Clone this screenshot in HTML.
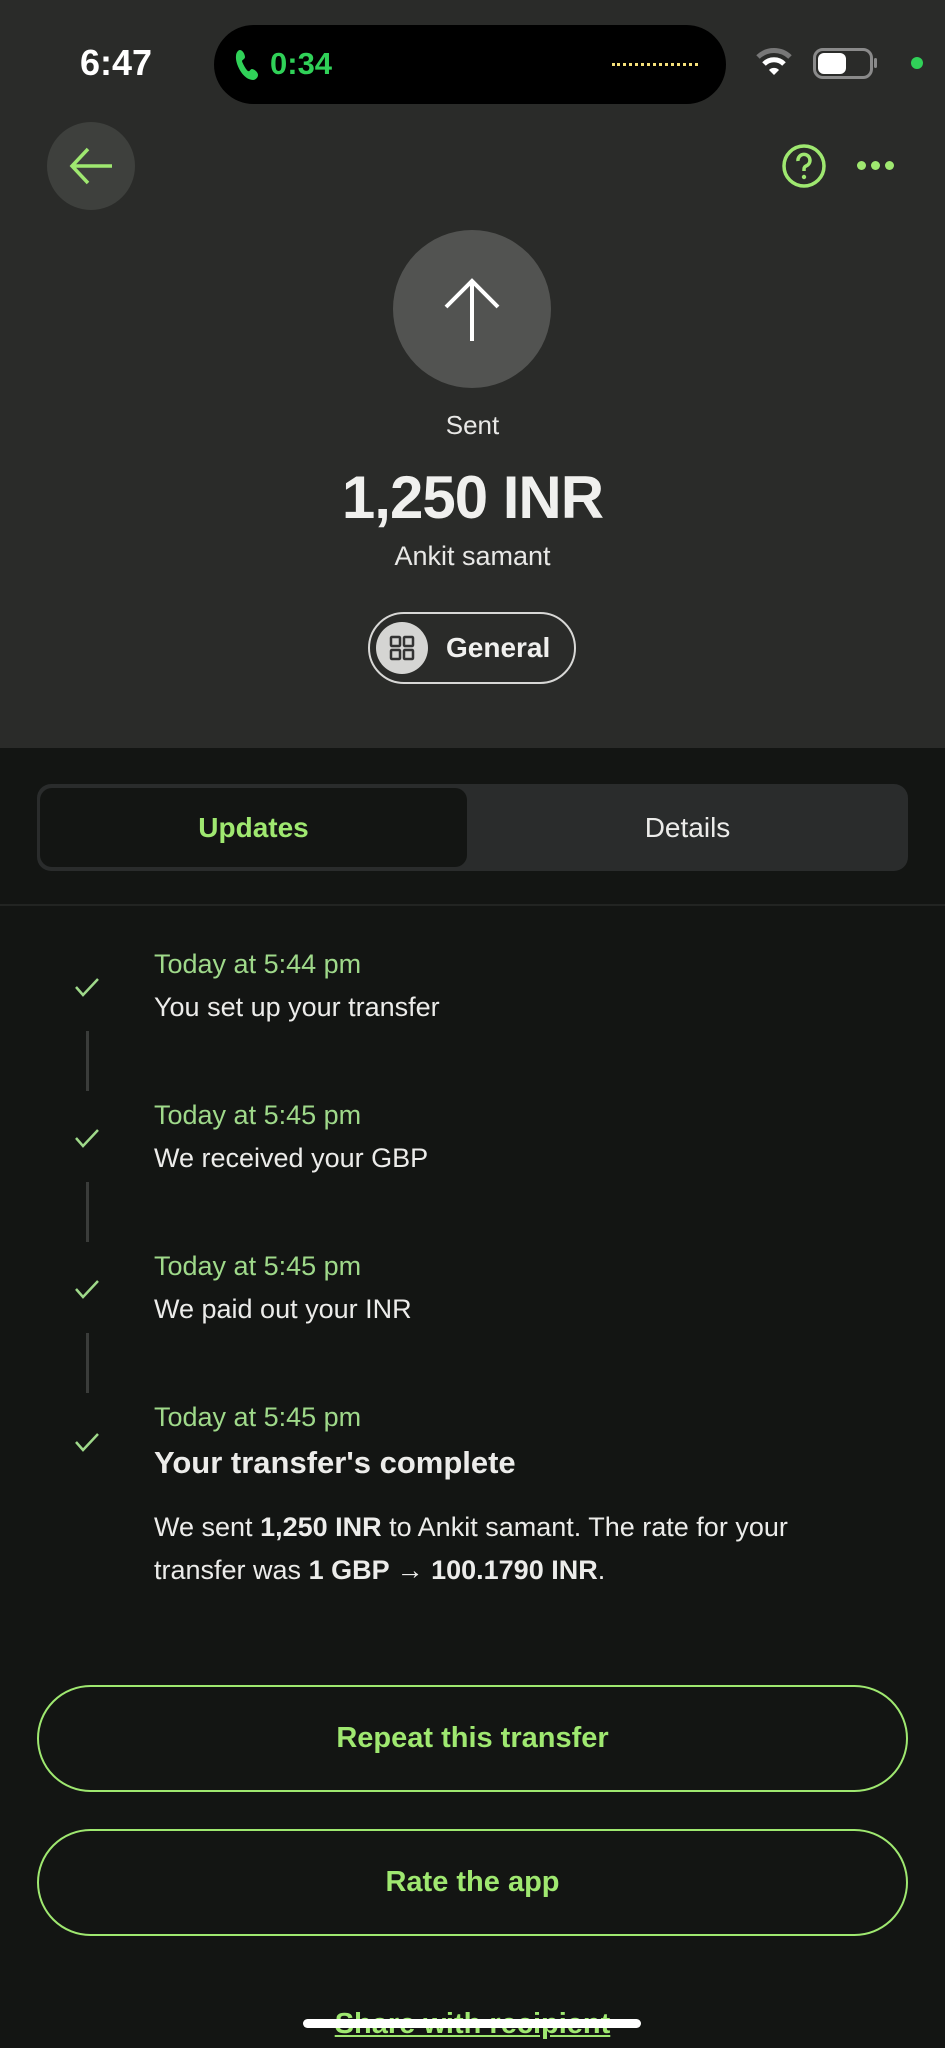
<!DOCTYPE html>
<html><head><meta charset="utf-8"><style>
*{margin:0;padding:0;box-sizing:border-box}
body{width:945px;height:2048px;overflow:hidden;background:#131513;font-family:"Liberation Sans",sans-serif;color:#e8e8e6;position:relative}
.a{position:absolute}
.hdr{left:0;top:0;width:945px;height:748px;background:#2a2b29}
.c{left:0;width:945px;text-align:center}
.t{left:154px;font-size:27px;color:#9fd98a}
.m{left:154px;font-size:27px;color:#ececea}
.chk{left:74px;width:26px;height:20px}
.ln{left:86px;width:3px;height:60px;background:#3a3c3a}
.btn{left:37px;width:871px;height:107px;border:2px solid #9fe870;border-radius:54px;color:#9fe870;font-weight:bold;font-size:29px;text-align:center;line-height:103px}
</style></head><body>
<div class="a hdr"></div>
<div class="a" style="left:80px;top:42px;font-size:36px;font-weight:bold;color:#fff">6:47</div>
<div class="a" style="left:214px;top:25px;width:512px;height:79px;background:#000;border-radius:40px"></div>
<svg class="a" style="left:234px;top:48px" width="26" height="34" viewBox="0 0 26 34"><path d="M6 2c3 0 5 5 5 7s-3 3-3 4 4 9 6 10 2-2 4-2 6 3 6 6-3 5-5 5C9 32 1 16 2 8 2 5 4 2 6 2z" fill="#30d158"/></svg>
<div class="a" style="left:270px;top:46px;font-size:31px;font-weight:bold;color:#30d158">0:34</div>
<div class="a" style="left:612px;top:63px;width:86px;height:0;border-top:3px dotted #f5e07a"></div>
<svg class="a" style="left:756px;top:47px" width="36" height="30" viewBox="0 0 36 30"><path d="M2 10a23 23 0 0 1 32 0" stroke="#777" stroke-width="5" fill="none"/><path d="M8 17a14 14 0 0 1 20 0" stroke="#fff" stroke-width="5" fill="none"/><path d="M13 23l5 5 5-5a7 7 0 0 0-10 0z" fill="#fff"/></svg>
<div class="a" style="left:813px;top:48px;width:60px;height:31px;border:3px solid #8a8a8a;border-radius:10px"></div>
<div class="a" style="left:818px;top:53px;width:28px;height:21px;background:#fff;border-radius:6px"></div>
<div class="a" style="left:874px;top:58px;width:3px;height:10px;background:#8a8a8a;border-radius:2px"></div>
<div class="a" style="left:911px;top:57px;width:12px;height:12px;background:#30d158;border-radius:50%"></div>
<div class="a" style="left:47px;top:122px;width:88px;height:88px;border-radius:50%;background:#3e403d"></div>
<svg class="a" style="left:66px;top:141px" width="50" height="50" viewBox="0 0 50 50"><path d="M46 25H6M22 8L6 25l16 17" stroke="#9fe870" stroke-width="3.5" fill="none"/></svg>
<svg class="a" style="left:780px;top:142px" width="48" height="48" viewBox="0 0 48 48"><circle cx="24" cy="24" r="20" stroke="#9fe870" stroke-width="3.5" fill="none"/><path d="M18 19a6 6 0 1 1 8 5c-2 1-2 2-2 5" stroke="#9fe870" stroke-width="3.5" fill="none"/><circle cx="24" cy="35" r="2.2" fill="#9fe870"/></svg>
<div class="a" style="left:857px;top:161px;width:9px;height:9px;border-radius:50%;background:#9fe870"></div>
<div class="a" style="left:871px;top:161px;width:9px;height:9px;border-radius:50%;background:#9fe870"></div>
<div class="a" style="left:885px;top:161px;width:9px;height:9px;border-radius:50%;background:#9fe870"></div>
<div class="a" style="left:393px;top:230px;width:158px;height:158px;border-radius:50%;background:#525351"></div>
<svg class="a" style="left:442px;top:275px" width="60" height="70" viewBox="0 0 60 70"><path d="M30 66V6M4 32L30 6l26 26" stroke="#fff" stroke-width="4" fill="none"/></svg>
<div class="a c" style="top:410px;font-size:26px">Sent</div>
<div class="a c" style="top:463px;font-size:60px;font-weight:bold;letter-spacing:-1px;color:#f0f0ee">1,250 INR</div>
<div class="a c" style="top:541px;font-size:27px">Ankit samant</div>
<div class="a" style="left:368px;top:612px;width:208px;height:72px;border:2px solid #d8d8d6;border-radius:36px"></div>
<div class="a" style="left:376px;top:622px;width:52px;height:52px;border-radius:50%;background:#d5d5d3"></div>
<svg class="a" style="left:388px;top:634px" width="28" height="28" viewBox="0 0 28 28"><g stroke="#333" stroke-width="2.5" fill="none"><rect x="3" y="3" width="9" height="9" rx="1"/><rect x="16" y="3" width="9" height="9" rx="1"/><rect x="3" y="16" width="9" height="9" rx="1"/><rect x="16" y="16" width="9" height="9" rx="1"/></g></svg>
<div class="a" style="left:446px;top:632px;font-size:28px;font-weight:bold;color:#f0f0ee">General</div>
<div class="a" style="left:37px;top:784px;width:871px;height:87px;background:#2a2c2c;border-radius:14px"></div>
<div class="a" style="left:40px;top:788px;width:427px;height:79px;background:#131513;border-radius:12px"></div>
<div class="a" style="left:40px;top:812px;width:427px;text-align:center;font-size:28px;font-weight:bold;color:#9fe870">Updates</div>
<div class="a" style="left:467px;top:812px;width:441px;text-align:center;font-size:28px;color:#ececea">Details</div>
<div class="a" style="left:0;top:904px;width:945px;height:2px;background:#222422"></div>

<svg class="a chk" style="top:977px" viewBox="0 0 26 20"><path d="M2 10l7 8L24 2" stroke="#9fd98a" stroke-width="2.5" fill="none"/></svg>
<div class="a t" style="top:949px">Today at 5:44 pm</div>
<div class="a m" style="top:992px">You set up your transfer</div>
<div class="a ln" style="top:1031px"></div>

<svg class="a chk" style="top:1128px" viewBox="0 0 26 20"><path d="M2 10l7 8L24 2" stroke="#9fd98a" stroke-width="2.5" fill="none"/></svg>
<div class="a t" style="top:1100px">Today at 5:45 pm</div>
<div class="a m" style="top:1143px">We received your GBP</div>
<div class="a ln" style="top:1182px"></div>

<svg class="a chk" style="top:1279px" viewBox="0 0 26 20"><path d="M2 10l7 8L24 2" stroke="#9fd98a" stroke-width="2.5" fill="none"/></svg>
<div class="a t" style="top:1251px">Today at 5:45 pm</div>
<div class="a m" style="top:1294px">We paid out your INR</div>
<div class="a ln" style="top:1333px"></div>

<svg class="a chk" style="top:1432px" viewBox="0 0 26 20"><path d="M2 10l7 8L24 2" stroke="#9fd98a" stroke-width="2.5" fill="none"/></svg>
<div class="a t" style="top:1402px">Today at 5:45 pm</div>
<div class="a m" style="top:1445px;font-size:31px;font-weight:bold">Your transfer's complete</div>
<div class="a m" style="top:1506px;line-height:43px;width:710px">We sent <b>1,250 INR</b> to Ankit samant. The rate for your transfer was <b>1 GBP → 100.1790 INR</b>.</div>

<div class="a btn" style="top:1685px">Repeat this transfer</div>
<div class="a btn" style="top:1829px">Rate the app</div>
<div class="a c" style="top:2008px;font-size:29px;font-weight:bold;color:#9fe870;text-decoration:underline">Share with recipient</div>
<div class="a" style="left:303px;top:2019px;width:338px;height:9px;border-radius:5px;background:#fff"></div>
</body></html>
